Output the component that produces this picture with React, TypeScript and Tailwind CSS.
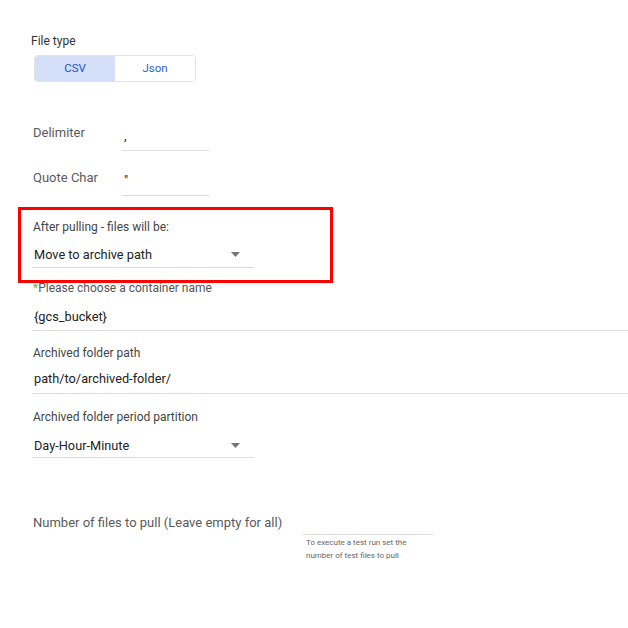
import React from "react";

function Caret() {
  return (
    <svg width="9" height="5" viewBox="0 0 9 5" className="block">
      <path d="M0 0 L9 0 L4.5 5 Z" fill="#757575" />
    </svg>
  );
}

export default function App() {
  return (
    <div
      className="relative w-[628px] h-[628px] bg-white overflow-hidden"
      style={{ fontFamily: "Roboto, 'Liberation Sans', sans-serif" }}
    >
      <div className="pl-[33px] pt-[33px]">
        <div className="text-[12px] leading-4 text-[#333] -ml-[2px]">File type</div>
        <div className="mt-[6px] ml-[1px] flex w-[162px] h-[27px] rounded-[4px] border border-[#e3e3e3] overflow-hidden">
          <div className="w-[80px] h-full flex items-center justify-center bg-[#d3e0f7] text-[11.5px] text-[#1c55c9]">
            CSV
          </div>
          <div className="flex-1 h-full flex items-center justify-center bg-white text-[11.5px] text-[#2f5fd0]">
            Json
          </div>
        </div>

        <div className="mt-[43px] flex">
          <div className="w-[89px] text-[13px] leading-4 text-[#5a5a5a]">Delimiter</div>
          <div className="w-[87px] h-[26px] border-b border-[#dcdcdc] pt-[3px] pl-[2px] text-[13px] leading-4 text-[#222]">
            ,
          </div>
        </div>

        <div className="mt-[19px] flex">
          <div className="w-[89px] text-[13px] leading-4 text-[#5a5a5a]">Quote Char</div>
          <div className="w-[87px] h-[26px] border-b border-[#dcdcdc] pt-[3px] pl-[2px] text-[13px] leading-4 text-[#222]">
            "
          </div>
        </div>

        <div className="mt-[23px] text-[12px] leading-4 text-[#444]">After pulling - files will be:</div>
        <div className="mt-[12px] -ml-[1px] w-[222px] h-[21px] border-b border-[#dcdcdc] pl-[2px] pr-[14px] flex items-start justify-between">
          <span className="text-[12.75px] leading-4 text-[#222]">Move to archive path</span>
          <span className="mt-[5px]"><Caret /></span>
        </div>

        <div className="mt-[12px] text-[12px] leading-4 text-[#555]">
          <span className="text-[#7cb342]">*</span>Please choose a container name
        </div>
        <div className="mt-[13px] -ml-[1px] h-[22px] border-b border-[#dcdcdc] pl-[2px] text-[12.75px] leading-4 text-[#222]">
          {"{gcs_bucket}"}
        </div>

        <div className="mt-[14px] text-[12px] leading-4 text-[#444]">Archived folder path</div>
        <div className="mt-[10px] -ml-[1px] h-[23px] border-b border-[#dcdcdc] pl-[2px] text-[12.75px] leading-4 text-[#222]">
          path/to/archived-folder/
        </div>

        <div className="mt-[15px] text-[12px] leading-4 text-[#444]">Archived folder period partition</div>
        <div className="mt-[13px] -ml-[1px] w-[222px] h-[20px] border-b border-[#dcdcdc] pl-[2px] pr-[14px] flex items-start justify-between">
          <span className="text-[12.75px] leading-4 text-[#222]">Day-Hour-Minute</span>
          <span className="mt-[5px]"><Caret /></span>
        </div>

        <div className="mt-[57px] flex">
          <div className="w-[270px] text-[13px] leading-4 text-[#5a5a5a]">Number of files to pull (Leave empty for all)</div>
          <div className="flex flex-col">
            <div className="w-[130px] h-[20px] border-b border-[#dcdcdc]" />
            <div className="pl-[3px] pt-[1px] text-[8px] leading-[13px] text-[#666]">
              To execute a test run set the
              <br />
              number of test files to pull
            </div>
          </div>
        </div>
      </div>

      <div className="absolute left-[18px] top-[207px] w-[315px] h-[76px] border-[3px] border-[#ff0000] pointer-events-none" />
    </div>
  );
}
